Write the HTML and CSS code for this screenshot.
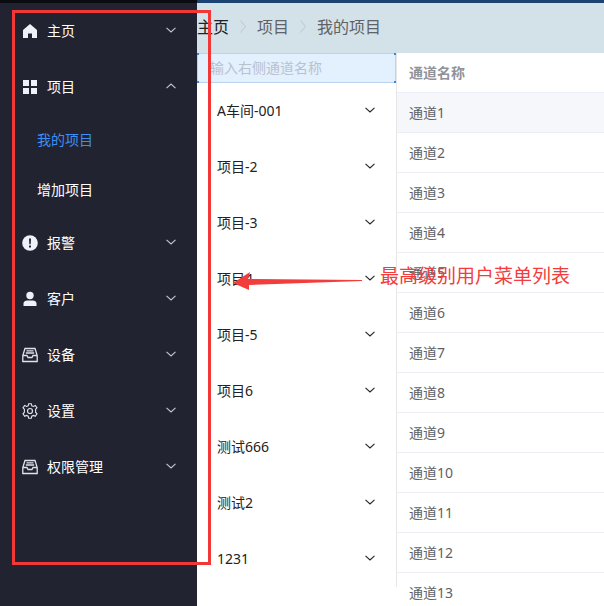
FILE: index.html
```html
<!DOCTYPE html>
<html lang="zh">
<head>
<meta charset="utf-8">
<title>我的项目</title>
<link rel="stylesheet" href="styles.css">
</head>
<body>
<div class="app">
  <aside class="sidebar">
    <div class="side-top"></div>
    <nav class="side-nav">
      <div class="side-item">
        <svg class="ico" viewBox="0 0 16 16"><path d="M8 1 L1 7 V15 H6 V10.500 H10 V15 H15 V7 Z" fill="#eef2f8"/></svg>
        <span class="side-label">主页</span>
        <svg class="chev light" viewBox="0 0 10 6"><path d="M.5.8 5 5 9.500.8"/></svg>
      </div>
      <div class="side-item">
        <svg class="ico" viewBox="0 0 16 16"><path d="M1 1H7V7H1ZM9 1H15V7H9ZM1 9H7V15H1ZM9 9H15V15H9Z" fill="#eef2f8"/></svg>
        <span class="side-label">项目</span>
        <svg class="chev light" viewBox="0 0 10 6"><path d="M.5 5.200 5 1 9.500 5.200"/></svg>
      </div>
      <div class="side-sub active">我的项目</div>
      <div class="side-sub">增加项目</div>
      <div class="side-item">
        <svg class="ico" viewBox="0 0 16 16"><circle cx="8" cy="8" r="7.800" fill="#eef2f8"/><path d="M7 3.500H9L8.700 9.300H7.300ZM7 10.500H9V12.500H7Z" fill="#222330"/></svg>
        <span class="side-label">报警</span>
        <svg class="chev light" viewBox="0 0 10 6"><path d="M.5.8 5 5 9.500.8"/></svg>
      </div>
      <div class="side-item">
        <svg class="ico" viewBox="0 0 16 16"><circle cx="8" cy="4.500" r="3.700" fill="#eef2f8"/><path d="M1.500 15V12.500C1.500 10.500 3.500 9.500 5 9.500H11C12.500 9.500 14.500 10.500 14.500 12.500V15Z" fill="#eef2f8"/></svg>
        <span class="side-label">客户</span>
        <svg class="chev light" viewBox="0 0 10 6"><path d="M.5.8 5 5 9.500.8"/></svg>
      </div>
      <div class="side-item">
        <svg class="ico" viewBox="0 0 16 16"><path d="M.8 8.500 3 1.500H13L15.200 8.500V14.500H.8ZM.8 8.500H5L6 10.500H10L11 8.500H15.200M3.800 6H12.200M4.500 3.800H11.500" fill="none" stroke="#dfe3ea" stroke-width="1.300"/></svg>
        <span class="side-label">设备</span>
        <svg class="chev light" viewBox="0 0 10 6"><path d="M.5.8 5 5 9.500.8"/></svg>
      </div>
      <div class="side-item">
        <svg class="ico" viewBox="0 0 16 16"><path d="M6.700.8H9.300L9.800 2.800 11.500 3.500 13.300 2.500 15 4.800 13.600 6.300V9.200L15 10.800 13.300 13.300 11.500 12.400 9.800 13.200 9.300 15.200H6.700L6.200 13.200 4.500 12.400 2.700 13.300 1 10.800 2.400 9.200V6.300L1 4.800 2.700 2.500 4.500 3.500 6.200 2.800Z" fill="none" stroke="#dfe3ea" stroke-width="1.100"/><circle cx="8" cy="8" r="2.500" fill="none" stroke="#dfe3ea" stroke-width="1.200"/></svg>
        <span class="side-label">设置</span>
        <svg class="chev light" viewBox="0 0 10 6"><path d="M.5.8 5 5 9.500.8"/></svg>
      </div>
      <div class="side-item">
        <svg class="ico" viewBox="0 0 16 16"><path d="M.8 8.500 3 1.500H13L15.200 8.500V14.500H.8ZM.8 8.500H5L6 10.500H10L11 8.500H15.200M3.800 6H12.200M4.500 3.800H11.500" fill="none" stroke="#dfe3ea" stroke-width="1.300"/></svg>
        <span class="side-label">权限管理</span>
        <svg class="chev light" viewBox="0 0 10 6"><path d="M.5.8 5 5 9.500.8"/></svg>
      </div>
    </nav>
  </aside>
  <main class="main">
    <div class="main-top"></div>
    <div class="crumbs">
      <span class="crumb first">主页</span>
      <svg class="sep" viewBox="0 0 6 13"><path d="M.5.5 5.500 6.500.5 12.500"/></svg>
      <span class="crumb">项目</span>
      <svg class="sep" viewBox="0 0 6 13"><path d="M.5.5 5.500 6.500.5 12.500"/></svg>
      <span class="crumb">我的项目</span>
    </div>
    <div class="panels">
      <section class="left">
        <div class="search">
          <span class="placeholder">输入右侧通道名称</span>
          <i class="dot tl"></i><i class="dot tr"></i><i class="dot bl"></i><i class="dot br"></i>
        </div>
        <div class="proj"><span>A车间-001</span><svg class="chev dark" viewBox="0 0 10 6"><path d="M.5.8 5 5 9.500.8"/></svg></div>
        <div class="proj"><span>项目-2</span><svg class="chev dark" viewBox="0 0 10 6"><path d="M.5.8 5 5 9.500.8"/></svg></div>
        <div class="proj"><span>项目-3</span><svg class="chev dark" viewBox="0 0 10 6"><path d="M.5.8 5 5 9.500.8"/></svg></div>
        <div class="proj"><span>项目4</span><svg class="chev dark" viewBox="0 0 10 6"><path d="M.5.8 5 5 9.500.8"/></svg></div>
        <div class="proj"><span>项目-5</span><svg class="chev dark" viewBox="0 0 10 6"><path d="M.5.8 5 5 9.500.8"/></svg></div>
        <div class="proj"><span>项目6</span><svg class="chev dark" viewBox="0 0 10 6"><path d="M.5.8 5 5 9.500.8"/></svg></div>
        <div class="proj"><span>测试666</span><svg class="chev dark" viewBox="0 0 10 6"><path d="M.5.8 5 5 9.500.8"/></svg></div>
        <div class="proj"><span>测试2</span><svg class="chev dark" viewBox="0 0 10 6"><path d="M.5.8 5 5 9.500.8"/></svg></div>
        <div class="proj"><span>1231</span><svg class="chev dark" viewBox="0 0 10 6"><path d="M.5.8 5 5 9.500.8"/></svg></div>
      </section>
      <section class="right">
        <div class="th">通道名称</div>
        <div class="td hover">通道1</div>
        <div class="td">通道2</div>
        <div class="td">通道3</div>
        <div class="td">通道4</div>
        <div class="td">通道5</div>
        <div class="td">通道6</div>
        <div class="td">通道7</div>
        <div class="td">通道8</div>
        <div class="td">通道9</div>
        <div class="td">通道10</div>
        <div class="td">通道11</div>
        <div class="td">通道12</div>
        <div class="td">通道13</div>
      </section>
    </div>
  </main>
  <div class="red-box"></div>
  <svg class="arrow" viewBox="0 0 130 22"><path d="M0 13 17 2 15 9 129 10V11L16 15 16 20Z" fill="#f33c3c"/></svg>
  <div class="note">最高级别用户菜单列表</div>
</div>
</body>
</html>
```
FILE: styles.css
```css
* { box-sizing: border-box; }
html, body { margin: 0; padding: 0; height: 100%; overflow: hidden; }
body { font-family: "Noto Sans", "Noto Sans CJK SC", sans-serif; font-size: 14px; background: #fff; }
.app { position: relative; display: flex; width: 604px; height: 606px; overflow: hidden; }

.sidebar { flex: 0 0 197px; background: #222330; color: #fff; }
.side-top { height: 3px; background: #0b0c12; }
.side-item { display: flex; align-items: center; height: 56px; padding: 0 21px 2px 22px; }
.ico { width: 16px; height: 16px; margin: 2px 9px 0 0; flex: none; }
.side-label { flex: 1; }
.side-sub { display: flex; align-items: center; height: 50px; padding: 0 0 2px 37px; }
.side-sub.active { color: #3d8ff5; }

.chev { width: 10px; height: 6px; fill: none; stroke-width: 1.100; flex: none; }
.chev.light { stroke: #c4c6d0; }
.chev.dark { stroke: #222; }

.main { flex: 1; min-width: 0; display: flex; flex-direction: column; overflow: hidden; }
.main-top { height: 3px; background: #1d4373; flex: none; }
.crumbs { height: 50px; flex: none; background: #d3e1e9; display: flex; align-items: center; padding-bottom: 4px; font-size: 16px; color: #606266; overflow: hidden; }
.crumb.first { color: #222; }
.sep { width: 6px; height: 13px; margin: 0 11px; fill: none; stroke: #c0c4cc; stroke-width: 1; flex: none; }

.panels { display: flex; flex: 1; min-height: 0; }
.left { flex: 0 0 200px; align-self: flex-start; border-right: 1px solid #e6e6e6; }
.search { position: relative; height: 30px; background: #e3f0fe; border: 1px solid #bcd3ec; display: flex; align-items: center; padding: 0 0 2px 12px; }
.placeholder { color: #b8c2cf; font-size: 14px; }
.dot { position: absolute; width: 2px; height: 2px; background: #2f86ee; }
.dot.tl { left: -1px; top: -1px; }
.dot.tr { right: -1px; top: -1px; }
.dot.bl { left: -1px; bottom: -1px; }
.dot.br { right: -1px; bottom: -1px; }
.proj { display: flex; align-items: center; justify-content: space-between; height: 56px; padding: 0 21px 2px 20px; color: #222; }

.right { flex: 1; min-width: 0; }
.th { height: 40px; display: flex; align-items: center; padding: 0 0 2px 12px; font-weight: 700; color: #909399; border-bottom: 1px solid #ebeef5; }
.td { height: 40px; display: flex; align-items: center; padding: 0 0 2px 12px; color: #606266; border-bottom: 1px solid #ebeef5; flex: none; }
.td.hover { background: #f5f7fa; }

.red-box { position: absolute; left: 12px; top: 10px; width: 199px; height: 555px; border: 3px solid #f33636; pointer-events: none; }
.arrow { position: absolute; left: 233px; top: 270px; width: 130px; height: 22px; }
.note { position: absolute; left: 380px; top: 262px; font-size: 19px; line-height: 28px; color: #f33c3c; white-space: nowrap; }
```
